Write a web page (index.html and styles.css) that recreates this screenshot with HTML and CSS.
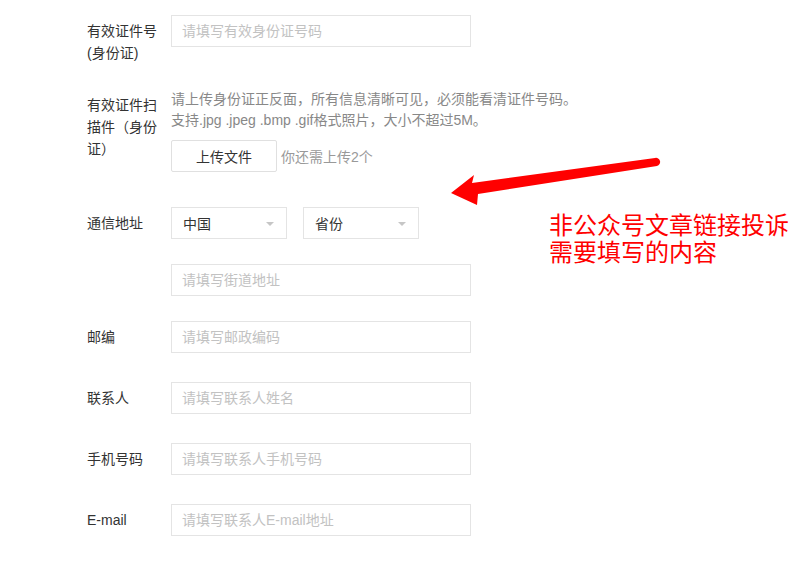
FILE: index.html
```html
<!DOCTYPE html>
<html lang="zh-CN">
<head>
<meta charset="utf-8">
<title>投诉表单</title>
<link rel="stylesheet" href="styles.css">
</head>
<body>
<div class="form">
  <div class="row">
    <div class="label">有效证件号(身份证)</div>
    <div class="field"><div class="input placeholder">请填写有效身份证号码</div></div>
  </div>
  <div class="row">
    <div class="label">有效证件扫描件（身份证）</div>
    <div class="field">
      <p class="hint">请上传身份证正反面，所有信息清晰可见，必须能看清证件号码。<br>支持.jpg .jpeg .bmp .gif格式照片，大小不超过5M。</p>
      <div class="upload">
        <div class="btn">上传文件</div>
        <span class="remain">你还需上传2个</span>
      </div>
    </div>
  </div>
  <div class="row row-lg">
    <div class="label">通信地址</div>
    <div class="field selects">
      <div class="select"><span>中国</span><i class="caret"></i></div>
      <div class="select"><span>省份</span><i class="caret"></i></div>
    </div>
  </div>
  <div class="row">
    <div class="label"></div>
    <div class="field"><div class="input placeholder">请填写街道地址</div></div>
  </div>
  <div class="row">
    <div class="label">邮编</div>
    <div class="field"><div class="input placeholder">请填写邮政编码</div></div>
  </div>
  <div class="row row-md">
    <div class="label">联系人</div>
    <div class="field"><div class="input placeholder">请填写联系人姓名</div></div>
  </div>
  <div class="row row-md">
    <div class="label">手机号码</div>
    <div class="field"><div class="input placeholder">请填写联系人手机号码</div></div>
  </div>
  <div class="row row-md">
    <div class="label">E-mail</div>
    <div class="field"><div class="input placeholder">请填写联系人E-mail地址</div></div>
  </div>
</div>

<svg class="arrow" width="800" height="563" viewBox="0 0 800 563" aria-hidden="true">
  <path d="M451,193 L474,175 L472,183 L655,158 A4,4 0 0 1 657,166 L478,194 L477,205 Z" fill="#ff0000"/>
</svg>
<div class="note">
  <div class="note-line">非公众号文章链接投诉</div>
  <div class="note-line">需要填写的内容</div>
</div>
</body>
</html>
```

FILE: styles.css
```css
* { box-sizing: border-box; }

html, body {
  margin: 0;
  padding: 0;
  background: #ffffff;
}

body {
  font-family: "Liberation Sans", "Noto Sans CJK SC", sans-serif;
  font-size: 14px;
  color: #333333;
  width: 800px;
  height: 563px;
  overflow: hidden;
  position: relative;
}

.form {
  display: flex;
  flex-direction: column;
  padding: 15px 0 0 87px;
}

.row {
  display: flex;
  align-items: flex-start;
}

.row + .row { margin-top: 25px; }
.row.row-lg { margin-top: 35px; }
.row.row-md { margin-top: 29px; }

.label {
  width: 71px;
  margin-right: 13px;
  padding-top: 5px;
  line-height: 22px;
  color: #333333;
  flex-shrink: 0;
}

.field {
  display: flex;
  flex-direction: column;
}

.input {
  width: 300px;
  height: 32px;
  border: 1px solid #e4e4e4;
  padding: 0 10px;
  line-height: 30px;
  background: #fff;
}

.placeholder { color: #c2c2c2; }

.hint {
  margin: 0;
  line-height: 21px;
  color: #888888;
  white-space: nowrap;
}

.upload {
  display: flex;
  align-items: center;
  margin-top: 9px;
}

.btn {
  width: 106px;
  height: 32px;
  border: 1px solid #e0e0e0;
  border-radius: 2px;
  display: flex;
  align-items: center;
  justify-content: center;
  color: #333333;
  background: #ffffff;
}

.remain {
  margin-left: 4px;
  color: #999999;
}

.selects {
  flex-direction: row;
  gap: 16px;
}

.select {
  width: 116px;
  height: 32px;
  border: 1px solid #e4e4e4;
  display: flex;
  align-items: center;
  justify-content: space-between;
  padding: 0 12px 0 11px;
  color: #333333;
}

.caret {
  display: block;
  width: 0;
  height: 0;
  border-left: 4.5px solid transparent;
  border-right: 4.5px solid transparent;
  border-top: 4.5px solid #c6c6c6;
  margin-top: 1px;
}

.arrow {
  position: absolute;
  left: 0;
  top: 0;
  pointer-events: none;
}

.note {
  position: absolute;
  left: 549px;
  top: 210px;
  display: flex;
  flex-direction: column;
  font-family: "Noto Sans CJK SC", sans-serif;
  font-size: 24px;
  color: #ff0000;
  white-space: nowrap;
}

.note-line {
  height: 27px;
  line-height: 27px;
}
```
